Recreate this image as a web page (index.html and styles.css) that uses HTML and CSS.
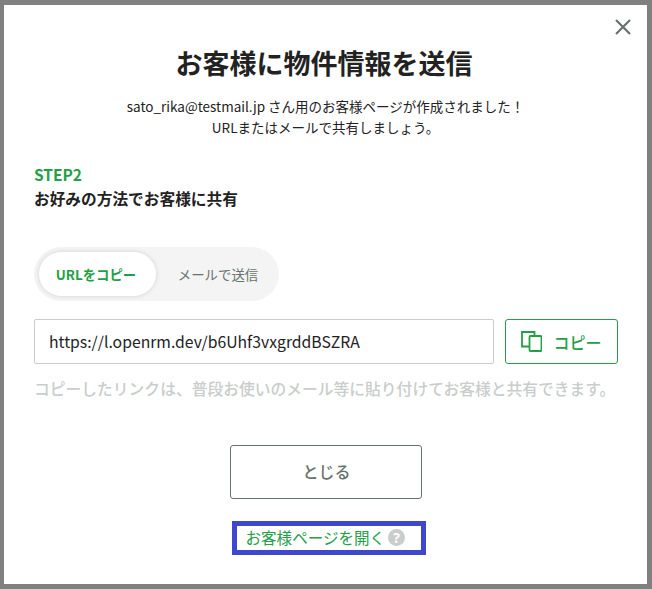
FILE: index.html
```html
<!DOCTYPE html>
<html lang="ja">
<head>
<meta charset="utf-8">
<title>お客様に物件情報を送信</title>
<link rel="stylesheet" href="styles.css">
</head>
<body>
<main class="modal">
  <button class="close" aria-label="閉じる">
    <svg width="16" height="16" viewBox="0 0 16 16"><path d="M1 1L15 15M15 1L1 15" stroke="#66736d" stroke-width="2.2" fill="none"/></svg>
  </button>
  <h1 class="title">お客様に物件情報を送信</h1>
  <p class="lead">sato_rika@testmail.jp さん用のお客様ページが作成されました！<br>URLまたはメールで共有しましょう。</p>
  <div class="step">STEP2</div>
  <div class="step-title">お好みの方法でお客様に共有</div>
  <div class="tabs">
    <div class="tab tab-active">URLをコピー</div>
    <div class="tab">メールで送信</div>
  </div>
  <div class="url-row">
    <div class="url-box">https://l.openrm.dev/b6Uhf3vxgrddBSZRA</div>
    <button class="copy">
      <svg width="21" height="21" viewBox="0 0 21 21" fill="none" stroke="#22a045" stroke-width="1.8"><path d="M8 15.5H1V1H13.5V5"/><rect x="8.5" y="5" width="12" height="15" rx="1" fill="#fff"/></svg>
      <span>コピー</span>
    </button>
  </div>
  <p class="hint">コピーしたリンクは、普段お使いのメール等に貼り付けてお客様と共有できます。</p>
  <div class="actions">
    <button class="dismiss">とじる</button>
    <div class="open-link">
      <span>お客様ページを開く</span>
      <svg class="help" width="17" height="17" viewBox="0 0 17 17"><circle cx="8.5" cy="8.5" r="8.5" fill="#c9cdcb"/><text x="8.5" y="13.5" text-anchor="middle" class="q">?</text></svg>
    </div>
  </div>
</main>
</body>
</html>
```
FILE: styles.css
```css
* { box-sizing: border-box; }
html, body { margin: 0; height: 100%; }
body {
  background: #808080;
  padding: 5px 5px 5px 4px;
  font-family: "Noto Sans CJK JP", "Noto Sans", sans-serif;
  color: #222;
}
.modal {
  position: relative;
  background: #fff;
  height: 579px;
  padding: 38px 30px 0;
}
.close {
  position: absolute;
  top: 14px;
  right: 16px;
  padding: 0;
  border: 0;
  background: none;
  line-height: 0;
}
.title {
  margin: 0;
  padding-right: 3px;
  font-size: 27px;
  line-height: 40px;
  font-weight: 700;
  text-align: center;
  color: #222;
}
.lead {
  margin: 13px 0 0;
  font-size: 13.5px;
  line-height: 21px;
  text-align: center;
  color: #222;
}
.step {
  margin-top: 24px;
  font-size: 15.5px;
  line-height: 24px;
  font-weight: 700;
  color: #22a045;
}
.step-title {
  font-size: 15.7px;
  line-height: 26px;
  font-weight: 700;
  color: #222;
}
.tabs {
  display: inline-flex;
  margin-top: 35px;
  padding: 5px;
  height: 54px;
  border-radius: 27px;
  background: #f4f4f4;
  vertical-align: top;
}
.tab {
  width: 117px;
  font-size: 13.4px;
  line-height: 44px;
  text-align: center;
  color: #66736d;
}
.tab-active {
  padding-right: 3px;
  background: #fff;
  border-radius: 22px;
  font-weight: 700;
  color: #22a045;
  box-shadow: 0 0 5px rgba(0, 0, 0, .14);
}
.tab:last-child {
  width: 118px;
  padding-left: 6px;
}
.url-row {
  display: flex;
  gap: 11px;
  margin-top: 18px;
}
.url-box {
  flex: 0 0 460px;
  height: 45px;
  padding: 0 14px;
  border: 1px solid #c9cdcb;
  border-radius: 2px;
  font-size: 15.75px;
  line-height: 43px;
  color: #222;
}
.copy {
  flex: 0 0 113px;
  display: flex;
  align-items: center;
  justify-content: center;
  gap: 11px;
  height: 45px;
  padding: 0;
  border: 1px solid #22a045;
  border-radius: 3px;
  background: #fff;
  font-family: inherit;
  font-size: 16px;
  font-weight: 500;
  color: #22a045;
}
.hint {
  margin: 13px 0 0;
  font-size: 15.78px;
  line-height: 24px;
  font-weight: 500;
  color: #c9cdcb;
  white-space: nowrap;
}
.actions {
  display: flex;
  flex-direction: column;
  align-items: center;
  margin-top: 44px;
}
.dismiss {
  width: 192px;
  height: 54px;
  padding: 0 0 2px 2px;
  border: 1px solid #66736d;
  border-radius: 3px;
  background: #fff;
  font-family: inherit;
  font-size: 16px;
  font-weight: 500;
  color: #66736d;
}
.open-link {
  display: flex;
  align-items: center;
  gap: 3px;
  margin-top: 22px;
  margin-left: 6px;
  width: 194px;
  height: 34px;
  padding: 0 0 3px 9px;
  border: 5px solid #3f48cc;
  font-size: 15.55px;
  color: #22a045;
}
.help {
  margin-top: 2px;
}
.q {
  font-family: "Noto Sans", sans-serif;
  font-size: 14px;
  font-weight: 700;
  fill: #fff;
}
```
